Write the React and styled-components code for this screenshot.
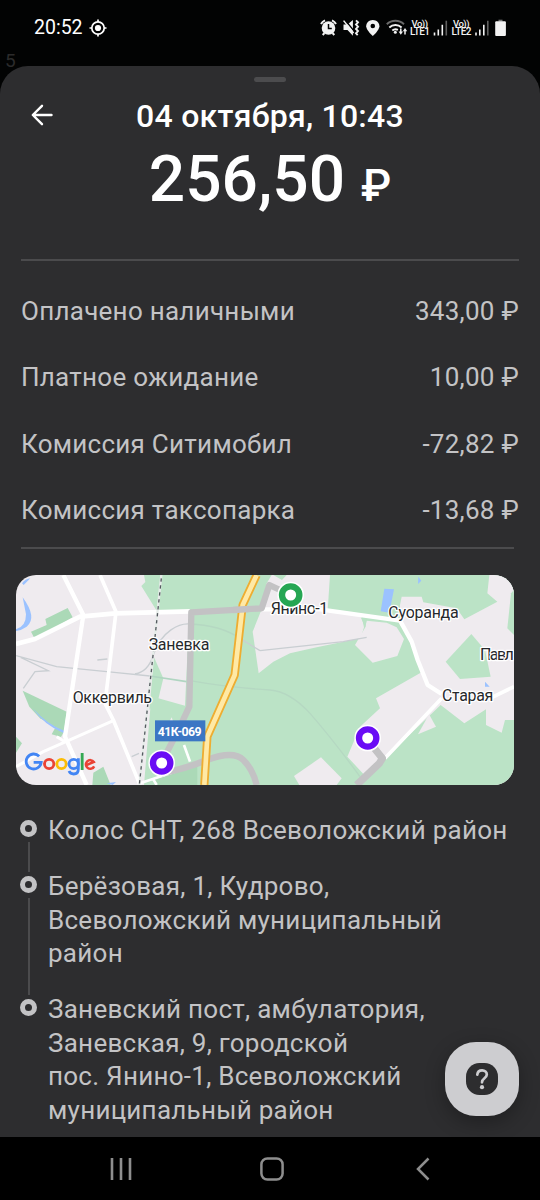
import React from "react";
import styled, { createGlobalStyle } from "styled-components";

const payments = [
  { title: "Оплачено наличными", sum: "343,00 ₽" },
  { title: "Платное ожидание", sum: "10,00 ₽" },
  { title: "Комиссия Ситимобил", sum: "-72,82 ₽" },
  { title: "Комиссия таксопарка", sum: "-13,68 ₽" },
];

const route = [
  ["Колос СНТ, 268 Всеволожский район"],
  ["Берёзовая, 1, Кудрово,", "Всеволожский муниципальный", "район"],
  [
    "Заневский пост, амбулатория,",
    "Заневская, 9, городской",
    "пос. Янино-1, Всеволожский",
    "муниципальный район",
  ],
];

const GlobalStyle = createGlobalStyle`
  * {
    box-sizing: border-box;
  }
  body {
    margin: 0;
    background: #000;
    font-family: Roboto, "Noto Sans", sans-serif;
  }
  button {
    padding: 0;
    border: none;
    background: none;
  }
`;

const Screen = styled.div`
  width: 540px;
  height: 1200px;
  display: flex;
  flex-direction: column;
  overflow: hidden;
  background: #020303;
`;

const StatusBar = styled.div`
  position: relative;
  height: 66px;
  padding: 0 14px 10px 34px;
  display: flex;
  align-items: center;
`;

const Clock = styled.div`
  width: 55px;
  color: #fff;
  font-size: 19.5px;
  line-height: 56px;
`;

const StatusRight = styled.div`
  height: 30px;
  margin: -5px 0 0 auto;
  display: flex;
`;

/* leftover of the page under the sheet */
const Behind = styled.div`
  position: absolute;
  left: 5px;
  top: 50px;
  color: #2b2b2b;
  font-size: 19px;
  line-height: 22px;
`;

const Sheet = styled.div`
  position: relative;
  height: 1071px;
  border-radius: 28px 28px 0 0;
  background: #2d2d2f;
  overflow: hidden;
`;

const Handle = styled.div`
  width: 32px;
  height: 5px;
  margin: 11px auto 0;
  border-radius: 3px;
  background: #4c4c4e;
`;

const Header = styled.div`
  height: 66px;
  display: grid;
  grid-template-columns: 85px 1fr 85px;
  align-items: center;
`;

const Back = styled.button`
  height: 22px;
  padding-left: 31px;
  display: flex;
`;

const DateTitle = styled.div`
  padding-top: 2px;
  color: #fff;
  font-size: 32px;
  font-weight: 500;
  line-height: 40px;
  letter-spacing: 0.25px;
  text-align: center;
  white-space: nowrap;
`;

const Total = styled.div`
  height: 111px;
  color: #fff;
  font-size: 64px;
  font-weight: 500;
  line-height: 64px;
  text-align: center;
  white-space: nowrap;
`;

const Currency = styled.span`
  font-size: 44px;
`;

const Divider = styled.div`
  height: 2px;
  margin: 0 ${({ $right }) => $right}px 0 21px;
  background: #4b4b4d;
`;

const Payments = styled.div`
  height: 286px;
  padding: 16.5px 21px 0;
`;

const Payment = styled.div`
  height: 66.5px;
  display: flex;
  justify-content: space-between;
  align-items: center;
  color: #c3c3c5;
  font-size: 26px;
  letter-spacing: 0.27px;
`;

const MapCard = styled.svg`
  width: 498px;
  height: 210px;
  margin: 26px 0 0 16px;
  display: block;
  border-radius: 20px;
`;

const PlaceName = styled.text`
  font-family: Roboto, sans-serif;
  font-size: 48px;
  fill: #26282b;
  stroke: #fff;
  stroke-width: 8px;
  stroke-linejoin: round;
  paint-order: stroke;
`;

const RoadNumber = styled.text`
  font-family: Roboto, sans-serif;
  font-size: 37px;
  font-weight: 700;
  fill: #fff;
`;

const Route = styled.div`
  padding: 29px 20px 0;
`;

const Stop = styled.div`
  display: flex;
  gap: 11px;
`;

const Track = styled.div`
  width: 17px;
  padding-top: 6px;
  display: flex;
  flex-direction: column;
  align-items: center;
`;

const Dot = styled.div`
  width: 17px;
  height: 17px;
  flex-shrink: 0;
  border: 5.5px solid #c3c3c5;
  border-radius: 50%;
`;

const TrackLine = styled.div`
  width: 2px;
  flex-grow: 1;
  margin: 5px 0 -2px;
  background: #4b4b4d;
`;

const Address = styled.div`
  padding-bottom: 22.5px;
  color: #c3c3c5;
  font-size: 26px;
  line-height: 33.5px;
  letter-spacing: 0.27px;
  white-space: nowrap;
`;

const Help = styled.button`
  position: absolute;
  right: 21px;
  bottom: 21px;
  width: 74px;
  height: 74px;
  display: flex;
  justify-content: center;
  align-items: center;
  border-radius: 31px;
  background: #cdcdd0;
  box-shadow: 0 6px 20px rgba(0, 0, 0, 0.3);
`;

const NavBar = styled.div`
  height: 63px;
  padding: 0 110px;
  display: flex;
  justify-content: space-between;
  align-items: center;
  background: #000;
`;

const HomeButton = styled.svg`
  width: 24px;
  height: 24px;
  margin-right: 5px;
`;

const StatusIcons = () => (
  <svg width="206" height="30" viewBox="0 0 206 30" fill="none">
    {/* alarm */}
    <circle cx="8.5" cy="17" r="6.8" fill="#f2f2f2" />
    <path d="M8.5 13v4.4h3.3" stroke="#000" strokeWidth="1.5" />
    <path
      d="M1 13a8.5 8.5 0 0 1 4-3.7M16 13a8.5 8.5 0 0 0-4-3.7M4.5 22l-1.8 2M12.5 22l1.8 2"
      stroke="#f2f2f2"
      strokeWidth="2"
    />
    {/* muted with vibration */}
    <path d="M23.5 13.5h4l5.4-4.5v15.7l-5.4-5.6h-4z" fill="#f2f2f2" />
    <path d="M24.8 8.6l10 12.4" stroke="#000" strokeWidth="1.5" />
    <path d="M23.6 9.6l10 12.4" stroke="#f2f2f2" strokeWidth="1.5" />
    <path
      d="M36 9.300l2 2-2 2.200 2 2.200-2 2.200 2 2.200-2 2.200 1.700 1.800"
      stroke="#f2f2f2"
      strokeWidth="1.900"
    />
    {/* location */}
    <path
      d="M52.8 9c-3.800 0-6.600 2.800-6.600 6.300 0 4.100 6.600 9.700 6.600 9.700s6.600-5.600 6.600-9.700c0-3.500-2.800-6.300-6.600-6.300z"
      fill="#f2f2f2"
    />
    <circle cx="52.8" cy="15" r="2.3" fill="#000" />
    {/* wi-fi */}
    <path d="M66.8 13.2a12.400 12.400 0 0 1 17.200 0" stroke="#6a6a6a" strokeWidth="1.9" />
    <path
      d="M69.300 16.500a9 9 0 0 1 12.300 0M72.300 19.500a5 5 0 0 1 5.600-.6"
      stroke="#f2f2f2"
      strokeWidth="1.9"
    />
    <circle cx="75.300" cy="21.300" r="1.500" fill="#f2f2f2" />
    <path d="M80.800 17.500v4M85 23.500v-4" stroke="#f2f2f2" strokeWidth="1.500" />
    <path d="M78.600 20.500h4.400l-2.200 3.300zM82.800 20.200h4.400l-2.200-3.300z" fill="#f2f2f2" />
    {/* both sim cards */}
    {[0, 41.5].map((dx) => (
      <g key={dx} transform={`translate(${dx} 0)`}>
        <path
          d="M114.500 21.500v3M118.300 18.500v6M122.300 13.700v10.800"
          stroke="#f2f2f2"
          strokeWidth="1.600"
        />
        <path d="M126.300 9.700v14.800" stroke="#606060" strokeWidth="1.600" />
        <g fill="#f2f2f2" fontFamily="Roboto, sans-serif" fontWeight="500">
          <text x="91.500" y="15.700" fontSize="9.500" textLength="16.500">
            Vo))
          </text>
          <text x="90" y="24.400" fontSize="10" textLength="20">
            {dx ? "LTE2" : "LTE1"}
          </text>
        </g>
      </g>
    ))}
    {/* battery */}
    <path d="M178.500 8.700h4v2h-4z" fill="#777" />
    <rect x="175.200" y="10.300" width="10.700" height="14.600" rx="1" fill="#f2f2f2" />
  </svg>
);

const Pin = ({ x, y, color }) => (
  <g>
    <circle cx={x} cy={y} r="40" fill="#fff" />
    <circle cx={x} cy={y} r="26" fill="#fff" stroke={color} strokeWidth="19" />
  </g>
);

const GoogleLogo = () => (
  <g fill="none" strokeWidth="8.5">
    <path d="M117.500 559A22.500 22.500 0 1 0 123.500 577H101" stroke="#4285f4" />
    <circle cx="147.500" cy="582" r="14" stroke="#ea4335" />
    <circle cx="184.500" cy="582" r="14" stroke="#fbbc05" />
    <circle cx="221" cy="582" r="14" stroke="#4285f4" />
    <path d="M235 565v32q0 15-14 15-10 0-14-9" stroke="#4285f4" />
    <path d="M246.500 549v51" stroke="#34a853" />
    <path d="M257.500 586l24-10a13 13 0 1 0 1 13" stroke="#ea4335" strokeWidth="7.500" />
  </g>
);

const RideMap = () => (
  <MapCard viewBox="48 15 1494 630">
    <rect x="48" y="15" width="1494" height="630" fill="#efebef" />
    {/* woods and fields */}
    <g fill="#bbe3c6">
      <path d="M432 15H1542V645H432L452 402 475 385 555 407 568 127 470 122 424 48 436 36z" />
      <path d="M462 262L490 325 475 387 448 420z" />
    </g>
    <g fill="#abd9b7">
      <path d="M93 185L140 165 136 147 203 114 218 142 105 208z" />
      <path d="M68 362L200 425 192 487 120 445 88 410z" />
      <path d="M165 475l28 8-10 18-28-8zM48 500l18 20-18 28zM280 608l30-18 22 55h-55z" />
      <path d="M470 645l-8-20 130-45v65z" />
    </g>
    {/* built-up areas */}
    <g fill="#efebef">
      <path d="M800 40L815 15H990L983 122 1085 140 1092 172 1082 205 1045 212 950 232 870 250 820 275 776 310 758 185 785 118z" />
      <path d="M1065 225L1096 172 1100 152 1160 158 1190 172 1212 207 1192 258 1118 278z" />
      <path d="M1200 155V105L1205 80H1265L1270 97 1370 115 1393 148 1492 95 1462 70 1468 15H1542V450H1515L1505 488 1458 465V418L1393 460 1322 405 1155 565 1095 617 1042 560 1080 470 1140 415 1128 385 1262 308 1240 235z" />
      <path d="M882 618L963 562 1025 625 1010 645H898z" />
      <path d="M1287 433L1308 470 1254 493z" />
      <path d="M490 490l25-48 4 12-20 40z" />
    </g>
    <g fill="#bbe3c6">
      <path d="M1414 192L1337 275 1380 327 1472 320 1455 240z" />
      <path d="M1542 60L1533 70 1522 175 1542 195z" />
      <path d="M1082 142l18 6-4 24zM820 15h40l-14 15z" />
    </g>
    {/* water */}
    <g fill="#9bc2ff">
      <path d="M1153 56l29 2-14 70-26-4zM1255 20l9 12-10 10zM1455 335l14 15h-14z" />
      <path d="M68 82q45 62 12 88-14 10-32 13v-5q30-8 30-45z" />
      <path d="M98 415q45 50 96 68l-4 6q-58-24-92-74zM66 40q10-14 25-15l-20 20zM320 640l28-4-10 9z" />
    </g>
    {/* railways and minor roads */}
    <g fill="none" stroke="#c9ced2" strokeWidth="4">
      <path d="M48 257L170 290 350 308 450 318M70 355L105 305 145 302 62 262M405 312Q445 305 460 255C485 180 540 160 568 162M292 270l30-3M395 560l22-10" />
      <path d="M780 242L1030 215 1045 212 1100 202M720 205L780 242" />
    </g>
    <g fill="none" stroke="#b0d5c1" strokeWidth="5">
      <path d="M450 318L560 335" />
    </g>
    <g fill="none" stroke="#b5d8c2" strokeWidth="4">
      <path d="M568 162Q660 165 720 205M570 332Q680 352 810 360 870 365 930 430 1000 510 1080 620" />
    </g>
    {/* main roads */}
    <g fill="none" stroke="#fff" strokeWidth="13" strokeLinejoin="round">
      <path d="M48 222L105 207 240 140 346 130 570 124" strokeWidth="14" />
      <path d="M190 15L250 135 195 500 260 645" />
      <path d="M300 15L348 125 315 400 340 450 420 645" strokeWidth="11" />
      <path d="M48 590L130 545 340 452M170 500l25 15" strokeWidth="9" />
      <path d="M785 118L960 118 1200 152 1235 215 1253 270 1283 345 1325 372" />
      <path d="M1325 385L1155 565M1470 385L1542 350" strokeWidth="11" />
      <path d="M420 640L540 600M552 525l18 50M458 625l12 20" strokeWidth="8" />
    </g>
    <path d="M484 15L450 340 418 645" fill="none" stroke="#e6ece9" strokeWidth="7" />
    <path
      d="M484 25L450 340 418 645"
      fill="none"
      stroke="#555a60"
      strokeWidth="4"
      strokeDasharray="10 11"
    />
    {/* ride track */}
    <g fill="none" stroke="#c3c2c4" strokeWidth="19" strokeLinejoin="round">
      <path d="M872 75L808 45 785 115 574 127 568 410 535 480 485 577" />
      <path d="M485 610Q560 595 620 570 700 540 730 570T770 645" />
      <path d="M1103 510L1147 565 1138 580 1070 645" strokeWidth="22" />
    </g>
    <g fill="none" strokeLinejoin="round">
      <path d="M770 15L728 105 704 315 622 500 613 645" stroke="#eead31" strokeWidth="25" />
      <path d="M770 15L728 105 704 315 622 500 613 645" stroke="#ffe9a5" strokeWidth="14" />
    </g>
    <path d="M700 120L745 117" stroke="#c3c2c4" strokeWidth="19" />
    <rect x="465" y="451" width="151" height="63" fill="#3b76c4" />
    <RoadNumber x="473" y="498" textLength="132">
      41К-069
    </RoadNumber>
    <PlaceName x="446" y="241" textLength="182">
      Заневка
    </PlaceName>
    <PlaceName x="218" y="399" textLength="238">
      Оккервиль
    </PlaceName>
    <PlaceName x="812" y="132" textLength="173">
      Янино-1
    </PlaceName>
    <PlaceName x="1165" y="144" textLength="211">
      Суоранда
    </PlaceName>
    <PlaceName x="1440" y="269" textLength="101">
      Павл
    </PlaceName>
    <PlaceName x="1326" y="394" textLength="154">
      Старая
    </PlaceName>
    <Pin x="872" y="75" color="#26a653" />
    <Pin x="1103" y="504" color="#6a0cf5" />
    <Pin x="485" y="579" color="#6a0cf5" />
    <GoogleLogo />
  </MapCard>
);

const App = () => {
  return (
    <Screen>
      <GlobalStyle />
      <StatusBar>
        <Clock>20:52</Clock>
        <svg width="18" height="18" viewBox="0 0 18 18" fill="none" stroke="#fff">
          <circle cx="9" cy="9" r="6.2" strokeWidth="1.7" />
          <circle cx="9" cy="9" r="3.1" fill="#fff" stroke="none" />
          <path d="M9 .5v2.500M9 15v2.500M.5 9h2.500M15 9h2.500" strokeWidth="1.7" />
        </svg>
        <StatusRight>
          <StatusIcons />
        </StatusRight>
        <Behind>5</Behind>
      </StatusBar>
      <Sheet>
        <Handle />
        <Header>
          <Back aria-label="Назад">
            <svg width="22" height="22" viewBox="0 0 22 22" fill="none">
              <path
                d="M20.500 11H2M11 1.800L1.800 11l9.200 9.200"
                stroke="#fff"
                strokeWidth="2.400"
                strokeLinecap="round"
                strokeLinejoin="round"
              />
            </svg>
          </Back>
          <DateTitle>04 октября, 10:43</DateTitle>
        </Header>
        <Total>
          256,50 <Currency>₽</Currency>
        </Total>
        <Divider $right={21} />
        <Payments>
          {payments.map(({ title, sum }) => (
            <Payment key={title}>
              <span>{title}</span>
              <span>{sum}</span>
            </Payment>
          ))}
        </Payments>
        <Divider $right={26} />
        <RideMap />
        <Route>
          {route.map((lines, i) => (
            <Stop key={lines[0]}>
              <Track>
                <Dot />
                {i < route.length - 1 && <TrackLine />}
              </Track>
              <Address>
                {lines.map((line) => (
                  <div key={line}>{line}</div>
                ))}
              </Address>
            </Stop>
          ))}
        </Route>
        <Help aria-label="Помощь">
          <svg width="32" height="32" viewBox="0 0 32 32" fill="none">
            <rect width="32" height="32" rx="13.5" fill="#2d2d2f" />
            <path
              d="M11.300 11.600c.3-2.600 2.200-4.200 4.800-4.200 2.700 0 4.700 1.700 4.700 4.200 0 3.800-4.800 3.600-4.800 7.700"
              stroke="#cdcdd0"
              strokeWidth="2.700"
              strokeLinecap="round"
            />
            <circle cx="16" cy="24.200" r="2.100" fill="#cdcdd0" />
          </svg>
        </Help>
      </Sheet>
      <NavBar>
        <svg width="22" height="24" viewBox="0 0 22 24">
          <path d="M2 1v22M11 1v22M20 1v22" stroke="#8e8e8e" strokeWidth="2.600" />
        </svg>
        <HomeButton viewBox="0 0 24 24">
          <rect
            x="1.400"
            y="1.400"
            width="21.200"
            height="21.200"
            rx="6"
            fill="none"
            stroke="#8e8e8e"
            strokeWidth="2.500"
          />
        </HomeButton>
        <svg width="14" height="24" viewBox="0 0 14 24">
          <path d="M12.500 1.500L2 12l10.500 10.500" fill="none" stroke="#8e8e8e" strokeWidth="2.500" />
        </svg>
      </NavBar>
    </Screen>
  );
};

export default App;
